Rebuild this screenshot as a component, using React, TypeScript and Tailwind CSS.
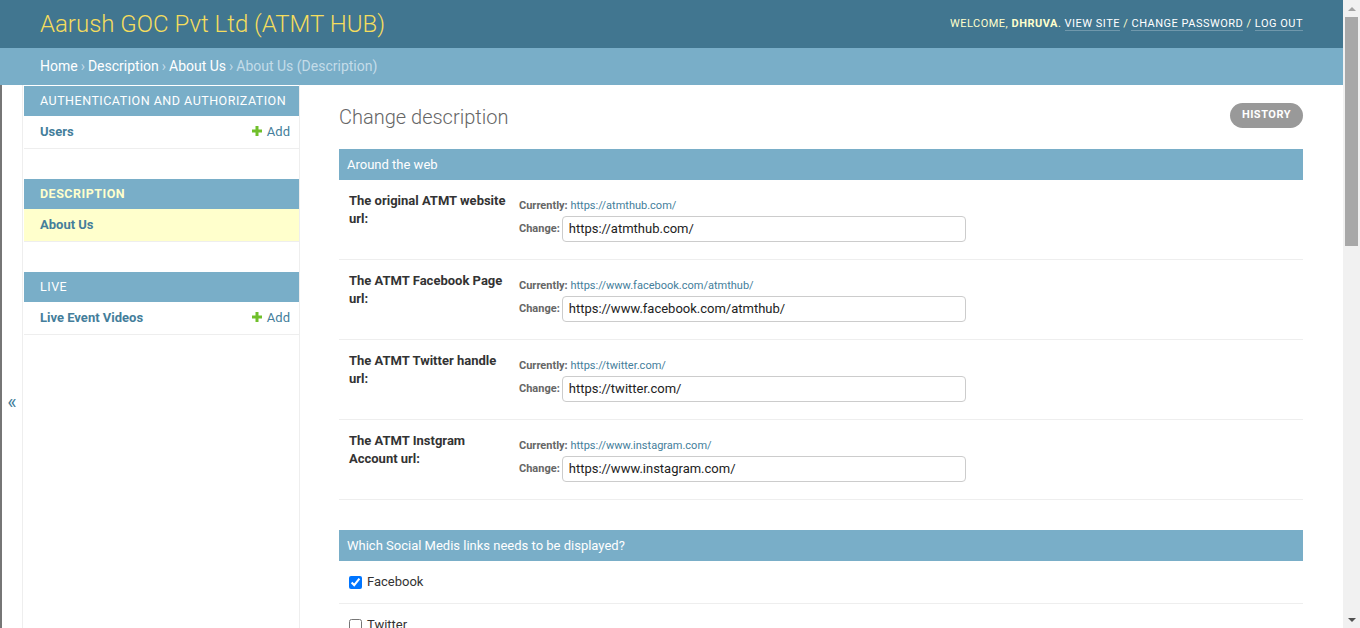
import React from "react";

const fields = [
  { label: "The original ATMT website url:", url: "https://atmthub.com/" },
  { label: "The ATMT Facebook Page url:", url: "https://www.facebook.com/atmthub/" },
  { label: "The ATMT Twitter handle url:", url: "https://twitter.com/" },
  { label: "The ATMT Instgram Account url:", url: "https://www.instagram.com/" },
];

const socials = [
  { name: "Facebook", checked: true },
  { name: "Twitter", checked: false },
];

function PlusIcon() {
  return (
    <svg width="10" height="10" viewBox="0 0 10 10" className="inline-block mr-[5px] -mt-[2px]">
      <path d="M3.5 0h3v3.5H10v3H6.5V10h-3V6.5H0v-3h3.5z" fill="#70bf2b" />
    </svg>
  );
}

function Module({ title, current, rows }: { title: string; current?: boolean; rows: { name: string; add?: boolean; active?: boolean }[] }) {
  return (
    <div className="mb-[30px]">
      <div
        className={`h-[30px] flex items-center pl-4 text-[12.5px] tracking-[0.5px] uppercase bg-[#79aec8] ${
          current ? "text-[#ffc] font-bold" : "text-white"
        }`}
      >
        {title}
      </div>
      {rows.map((r) => (
        <div
          key={r.name}
          className={`h-[33px] flex items-center justify-between pl-4 pr-[9px] border-b border-[#eee] text-[13px] ${
            r.active ? "bg-[#ffc]" : ""
          }`}
        >
          <span className="font-bold text-[#447e9b]">{r.name}</span>
          {r.add && (
            <span className="text-[#447e9b] flex items-center">
              <PlusIcon />
              Add
            </span>
          )}
        </div>
      ))}
    </div>
  );
}

export default function App() {
  return (
    <div className="h-[628px] w-[1360px] overflow-hidden flex bg-white font-['Roboto','Liberation_Sans',sans-serif] text-[#333]">
      <div className="flex-1 flex flex-col min-w-0">
        {/* header */}
        <div className="h-[48px] shrink-0 bg-[#417690] flex items-center justify-between px-10">
          <div className="text-[24px] font-light text-[#f5dd5d] -mt-[1px]">Aarush GOC Pvt Ltd (ATMT HUB)</div>
          <div className="text-[11px] tracking-[0.5px] uppercase text-[#ffc] mt-[1px]">
            Welcome, <strong className="font-bold">dhruva</strong>.{" "}
            <span className="border-b border-[rgba(255,255,255,0.25)] text-white">View site</span> /{" "}
            <span className="border-b border-[rgba(255,255,255,0.25)] text-white">Change password</span> /{" "}
            <span className="border-b border-[rgba(255,255,255,0.25)] text-white">Log out</span>
          </div>
        </div>
        {/* breadcrumbs */}
        <div className="h-[37px] shrink-0 bg-[#79aec8] flex items-center px-10 text-[14px] text-[#c4dce8]">
          <span className="text-white">Home</span>
          <span className="mx-[3px]">›</span>
          <span className="text-white">Description</span>
          <span className="mx-[3px]">›</span>
          <span className="text-white">About Us</span>
          <span className="mx-[3px]">›</span>
          <span>About Us (Description)</span>
        </div>

        <div className="flex flex-1 min-h-0">
          {/* sidebar toggle */}
          <div className="w-[23px] shrink-0 border-l-2 border-l-[#767676] border-r border-r-[#eee] flex justify-center text-[#447e9b] text-[20px] pt-[302px]">
            «
          </div>
          {/* nav sidebar */}
          <div className="w-[277px] shrink-0 border-r border-[#eee] pl-px pt-px">
            <Module title="Authentication and Authorization" rows={[{ name: "Users", add: true }]} />
            <Module title="Description" current rows={[{ name: "About Us", active: true }]} />
            <Module title="Live" rows={[{ name: "Live Event Videos", add: true }]} />
          </div>
          {/* main content */}
          <div className="flex-1 min-w-0 pl-[39px] pr-10 pt-[17px]">
            <div className="flex items-start justify-between">
              <h1 className="text-[20px] font-light text-[#666] leading-[30px]">Change description</h1>
              <div className="bg-[#999] text-white rounded-[15px] text-[11px] font-bold uppercase tracking-[0.5px] h-[25px] px-3 flex items-center mt-px">
                History
              </div>
            </div>
            <div className="mt-[17px]">
              <div className="h-[31px] bg-[#79aec8] text-white text-[13px] flex items-center px-2">Around the web</div>
              {fields.map((f) => (
                <div key={f.label} className="h-[80px] border-b border-[#eee] flex px-[10px] pt-[10px]">
                  <div className="w-[170px] shrink-0 pr-[10px] pt-[2px] text-[13px] font-bold leading-[18px] text-[#333]">{f.label}</div>
                  <div className="text-[11px] text-[#666] leading-[20px] pt-[6px]">
                    <div>
                      <span className="font-bold">Currently:</span> <span className="text-[#447e9b]">{f.url}</span>
                    </div>
                    <div className="flex items-center">
                      <span className="font-bold mr-[2px]">Change:</span>
                      <div className="w-[404px] h-[26px] border border-[#ccc] rounded-[4px] px-[6px] flex items-center text-[13px] text-[#222]">
                        {f.url}
                      </div>
                    </div>
                  </div>
                </div>
              ))}
            </div>
            <div className="mt-[30px]">
              <div className="h-[31px] bg-[#79aec8] text-white text-[13px] flex items-center px-2">
                Which Social Medis links needs to be displayed?
              </div>
              {socials.map((s) => (
                <div key={s.name} className="h-[43px] border-b border-[#eee] flex items-center px-[10px]">
                  <input type="checkbox" defaultChecked={s.checked} className="w-[13px] h-[13px] m-0 mr-[5px]" />
                  <span className="text-[13px] text-[#333]">{s.name}</span>
                </div>
              ))}
            </div>
          </div>
        </div>
      </div>
      {/* scrollbar */}
      <div className="w-[17px] shrink-0 bg-[#f1f1f1] flex flex-col items-center">
        <div className="h-[17px] flex items-center justify-center">
          <div className="w-0 h-0 border-l-[4px] border-r-[4px] border-b-[4px] border-l-transparent border-r-transparent border-b-[#a3a3a3]" />
        </div>
        <div className="w-[13px] h-[229px] bg-[#a8a8a8]" />
        <div className="flex-1" />
        <div className="h-[17px] flex items-center justify-center">
          <div className="w-0 h-0 border-l-[4px] border-r-[4px] border-t-[4px] border-l-transparent border-r-transparent border-t-[#505050]" />
        </div>
      </div>
    </div>
  );
}
